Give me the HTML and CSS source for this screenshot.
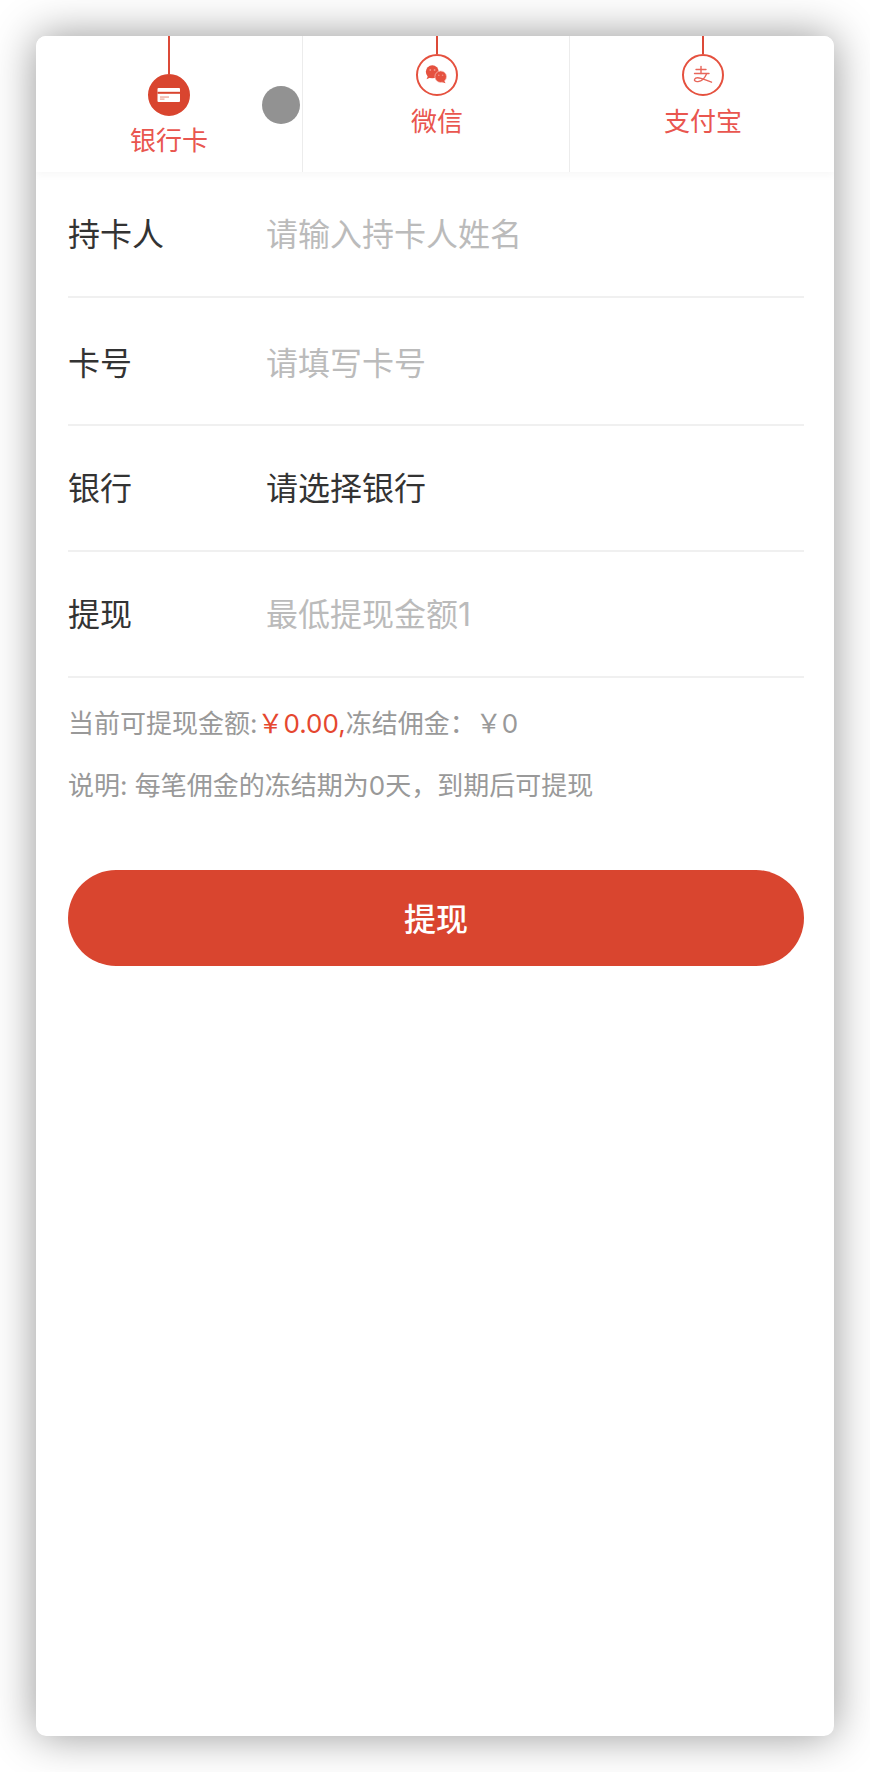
FILE: index.html
```html
<!DOCTYPE html>
<html lang="zh-CN">
<head>
<meta charset="utf-8">
<title>提现</title>
<link rel="stylesheet" href="styles.css">
</head>
<body>
<main class="card">
  <nav class="tabs">
    <div class="tab tab-active">
      <span class="stem stem-long"></span>
      <span class="badge badge-solid">
        <svg class="icon" viewBox="0 0 42 42" aria-hidden="true">
          <rect x="9.500" y="14" width="22.500" height="14" rx="1" fill="#fff"/>
          <rect x="9.500" y="17.800" width="22.500" height="2" fill="#d9452f"/>
          <rect x="12" y="22.400" width="9" height="1.300" fill="#eea598"/>
          <rect x="12" y="24.500" width="4.500" height="1.200" fill="#eea598"/>
        </svg>
      </span>
      <span class="tab-label">银行卡</span>
    </div>
    <div class="tab">
      <span class="stem"></span>
      <span class="badge">
        <svg class="icon" viewBox="0 0 42 42" aria-hidden="true">
          <circle cx="16.300" cy="17.800" r="6.500" fill="#e5513f"/>
          <path d="M12 22l-1.500 3.200 4-1.600z" fill="#e5513f"/>
          <circle cx="24.700" cy="22.700" r="5.800" fill="#e5513f" stroke="#f9c9c2" stroke-width=".7"/>
          <path d="M28 26.500l1.600 2.800-4-1.400z" fill="#e5513f"/>
          <circle cx="14.300" cy="16" r=".9" fill="#f2938a"/>
          <circle cx="18.600" cy="16" r=".9" fill="#f2938a"/>
          <circle cx="22.800" cy="21.200" r=".8" fill="#f2938a"/>
          <circle cx="26.600" cy="21.200" r=".8" fill="#f2938a"/>
        </svg>
      </span>
      <span class="tab-label">微信</span>
    </div>
    <div class="tab">
      <span class="stem"></span>
      <span class="badge">
        <svg class="icon" viewBox="0 0 42 42" aria-hidden="true">
          <g fill="none" stroke="#e8665a" stroke-width="1.400" stroke-linecap="round" stroke-linejoin="round">
            <path d="M14 15.500h10"/>
            <path d="M19 12.500v7"/>
            <path d="M12.500 19.500h14.500"/>
            <path d="M24.500 20c-1.500 3.700-5 7-8.500 7.600-2.600.4-4-1-3.400-2.400.7-1.500 3.400-1.800 6.400-.9 3.500 1.100 7 2.700 10.500 3.900"/>
          </g>
        </svg>
      </span>
      <span class="tab-label">支付宝</span>
    </div>
    <span class="float-dot"></span>
  </nav>

  <section class="form">
    <div class="row"><span class="row-label">持卡人</span><span class="row-hint">请输入持卡人姓名</span></div>
    <div class="row row-second"><span class="row-label">卡号</span><span class="row-hint">请填写卡号</span></div>
    <div class="row"><span class="row-label">银行</span><span class="row-value">请选择银行</span></div>
    <div class="row"><span class="row-label">提现</span><span class="row-hint">最低提现金额1</span></div>
  </section>

  <p class="note note-balance">当前可提现金额:<span class="amount">￥0.00,</span>冻结佣金：￥0</p>
  <p class="note">说明: 每笔佣金的冻结期为0天，到期后可提现</p>

  <button class="submit" type="button">提现</button>
</main>
</body>
</html>
```

FILE: styles.css
```css
* { box-sizing: border-box; }

html, body {
  margin: 0;
  background: #fff;
}

body {
  padding: 36px;
  height: 1772px;
  overflow: hidden;
  font-family: Inter, "Noto Sans CJK SC", "Liberation Sans", sans-serif;
}

.card {
  width: 798px;
  height: 1700px;
  background: #fff;
  border-radius: 10px;
  box-shadow: 0 0 44px rgba(0, 0, 0, .42);
  overflow: hidden;
}

.tabs {
  position: relative;
  display: flex;
  height: 136px;
  background: #fff;
  box-shadow: 0 3px 8px rgba(0, 0, 0, .035);
}

.tab {
  flex: 0 0 267px;
  display: flex;
  flex-direction: column;
  align-items: center;
  padding-left: 2px;
  border-right: 1px solid #ececec;
}

.tab-active { padding-left: 0; }

.tab:last-of-type {
  flex: 1;
  border-right: 0;
}

.stem {
  width: 2px;
  height: 18px;
  background: #dc4a38;
}

.stem-long { height: 38px; }

.badge {
  width: 42px;
  height: 42px;
  border: 2px solid #e5513f;
  border-radius: 50%;
  background: #fff;
  flex: none;
  position: relative;
}

.badge-solid {
  background: #d9452f;
  border-color: #d9452f;
}

.icon {
  position: absolute;
  left: -2px;
  top: -2px;
  width: 42px;
  height: 42px;
  display: block;
}

.tab-label {
  margin-top: 11px;
  font-size: 26px;
  line-height: 30px;
  color: #e9564f;
}

.tab-active .tab-label { margin-top: 10px; }

.float-dot {
  position: absolute;
  left: 226px;
  top: 50px;
  width: 38px;
  height: 38px;
  border-radius: 50%;
  background: #929292;
}

.form { padding: 0 30px 0 32px; }

.row {
  display: flex;
  align-items: center;
  height: 126px;
  padding-top: 2px;
  border-bottom: 2px solid #f0f0f0;
  font-size: 32px;
  line-height: 44px;
}

.row-second {
  height: 128px;
  padding-top: 5px;
}

.row-label {
  flex: 0 0 198px;
  color: #333;
}

.row-hint { color: #bbb; }
.row-value { color: #333; }

.note {
  margin: 0 0 0 32px;
  font-size: 26px;
  line-height: 34px;
  color: #999;
}

.note-balance { margin-top: 29px; }
.note-balance + .note { margin-top: 28px; }

.amount { color: #e5472f; }

.submit {
  display: block;
  width: 736px;
  height: 96px;
  margin: 67px 0 0 32px;
  padding: 0 0 3px;
  border: 0;
  border-radius: 48px;
  background: #d9452f;
  color: #fff;
  font-family: inherit;
  font-size: 32px;
  font-weight: 500;
}
```
